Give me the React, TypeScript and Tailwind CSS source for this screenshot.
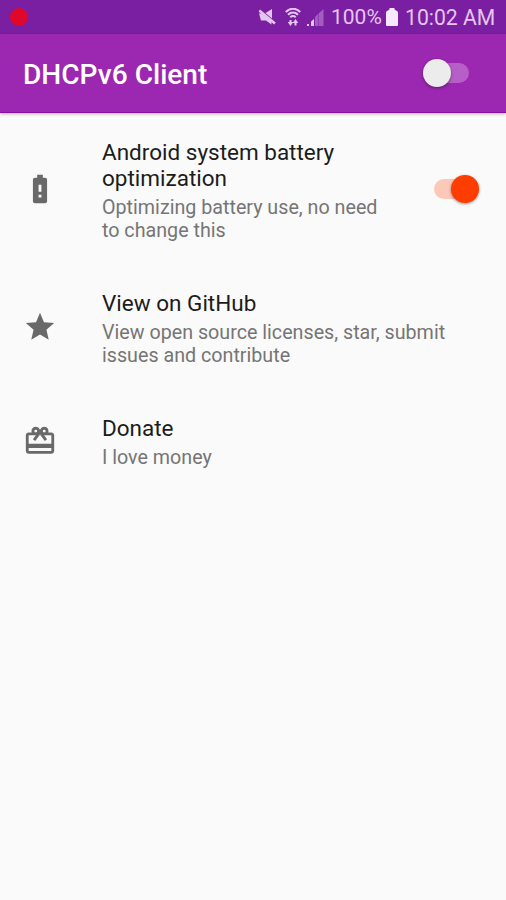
import type { ReactNode } from "react";
import clsx from "clsx";
import { MdBatteryAlert, MdCardGiftcard, MdStar } from "react-icons/md";

interface PreferenceProps {
  icon: ReactNode;
  title: string;
  summary: string;
  widget?: ReactNode;
}

function StatusBar() {
  return (
    <div className="flex h-[34px] items-center bg-[#7b1fa2] pl-[10px] pr-[11px] text-[#e3c6ee]">
      <span className="size-[18px] rounded-full bg-[#e0082a]" />
      <div className="ml-auto flex items-center">
        {/* muted speaker */}
        <svg className="h-[18px] w-[18px]" viewBox="0 0 18 18" fill="currentColor">
          <path d="M1 5.5h3l9.5 8v3L8 12.5H3z" />
          <path d="M7.5 5 14 1v9.5z" />
          <path d="M1.3 2.5 17 15.500" stroke="currentColor" strokeWidth="2.4" />
        </svg>
        <svg className="ml-[9px] h-[18px] w-[16px]" viewBox="0 0 16 18" fill="none" stroke="currentColor">
          <path d="M.8 4C5-.3 11-.3 15.2 4M3 6.7c3-2.8 7-2.8 10 0M5.3 9.200c1.7-1.5 3.7-1.5 5.4 0" strokeWidth="2.1" />
          <path d="M5.5 12v3M10.5 14v3.5" strokeWidth="2" />
          <path d="M2.7 14h5.6l-2.8 4zM7.7 15l2.8-4 2.8 4z" fill="currentColor" stroke="none" />
        </svg>
        <svg className="ml-[5px] h-[18px] w-[18px]" viewBox="0 0 18 18" fill="currentColor">
          <path d="M9 9l3-3v12H9zM12.5 5.5 17.5 1v17h-5z" opacity=".38" />
          <path d="M1 16h2v2H1zM5 13.5 8 11v7H5z" />
        </svg>
        <span className="ml-[7px] w-[52px] whitespace-nowrap pt-[2px] text-[21px] leading-none">100%</span>
        <svg className="ml-[3px] h-[18px] w-[12px]" viewBox="0 0 12 18" fill="#f7e9fb">
          <path d="M3.5 0h5v1.5L11 3q1 .5 1 1.5V17q0 1-1 1H1q-1 0-1-1V4.5Q0 3.5 1 3l2.5-1.5z" />
        </svg>
        <span className="ml-[7px] w-[90px] whitespace-nowrap pt-[2px] text-[21.2px] leading-none">10:02 AM</span>
      </div>
    </div>
  );
}

function Switch({ checked }: { checked: boolean }) {
  return (
    <span
      className={clsx(
        "relative block h-[20px] rounded-full",
        checked ? "w-[39px] bg-[#fcc8b8]" : "w-[41px] bg-[#b75fc7]",
      )}
    >
      <span
        className={clsx(
          "absolute -top-[4px] size-[28px] rounded-full shadow-[0_1px_3px_rgba(0,0,0,0.4)]",
          checked ? "left-[17px] bg-[#ff3d00]" : "-left-[5px] bg-[#ececec]",
        )}
      />
    </span>
  );
}

function Preference({ icon, title, summary, widget }: PreferenceProps) {
  return (
    <div className="flex items-center py-[25.3px] pl-[23px] pr-[33px]">
      <span className="w-[79px] shrink-0 text-[34px] text-[#696969]">{icon}</span>
      <div className="-mb-[2px] flex-1">
        <p className="text-[22.5px] leading-[26.3px] text-[#1c1c1c]">{title}</p>
        <p className="mt-[4.3px] text-[19.7px] leading-[23px] text-[#757575]">{summary}</p>
      </div>
      {widget}
    </div>
  );
}

export default function App() {
  return (
    <div className="h-[900px] w-[506px] overflow-hidden bg-[#fafafa] font-[Roboto,sans-serif]">
      <StatusBar />
      <header className="flex h-[79px] items-center justify-between border-b border-[#8411a0] bg-[#9c27b0] pl-[23px] pr-[37px] shadow-[0_1px_3px_rgba(0,0,0,0.3)]">
        <h1 className="pt-[5px] text-[28.1px] font-medium leading-none text-white">DHCPv6 Client</h1>
        <Switch checked={false} />
      </header>
      <main className="pt-[0.4px]">
        <Preference
          icon={<MdBatteryAlert />}
          title="Android system battery optimization"
          summary="Optimizing battery use, no need to change this"
          widget={<div className="ml-[48px]"><Switch checked /></div>}
        />
        <Preference
          icon={<MdStar />}
          title="View on GitHub"
          summary="View open source licenses, star, submit issues and contribute"
        />
        <Preference icon={<MdCardGiftcard />} title="Donate" summary="I love money" />
      </main>
    </div>
  );
}
